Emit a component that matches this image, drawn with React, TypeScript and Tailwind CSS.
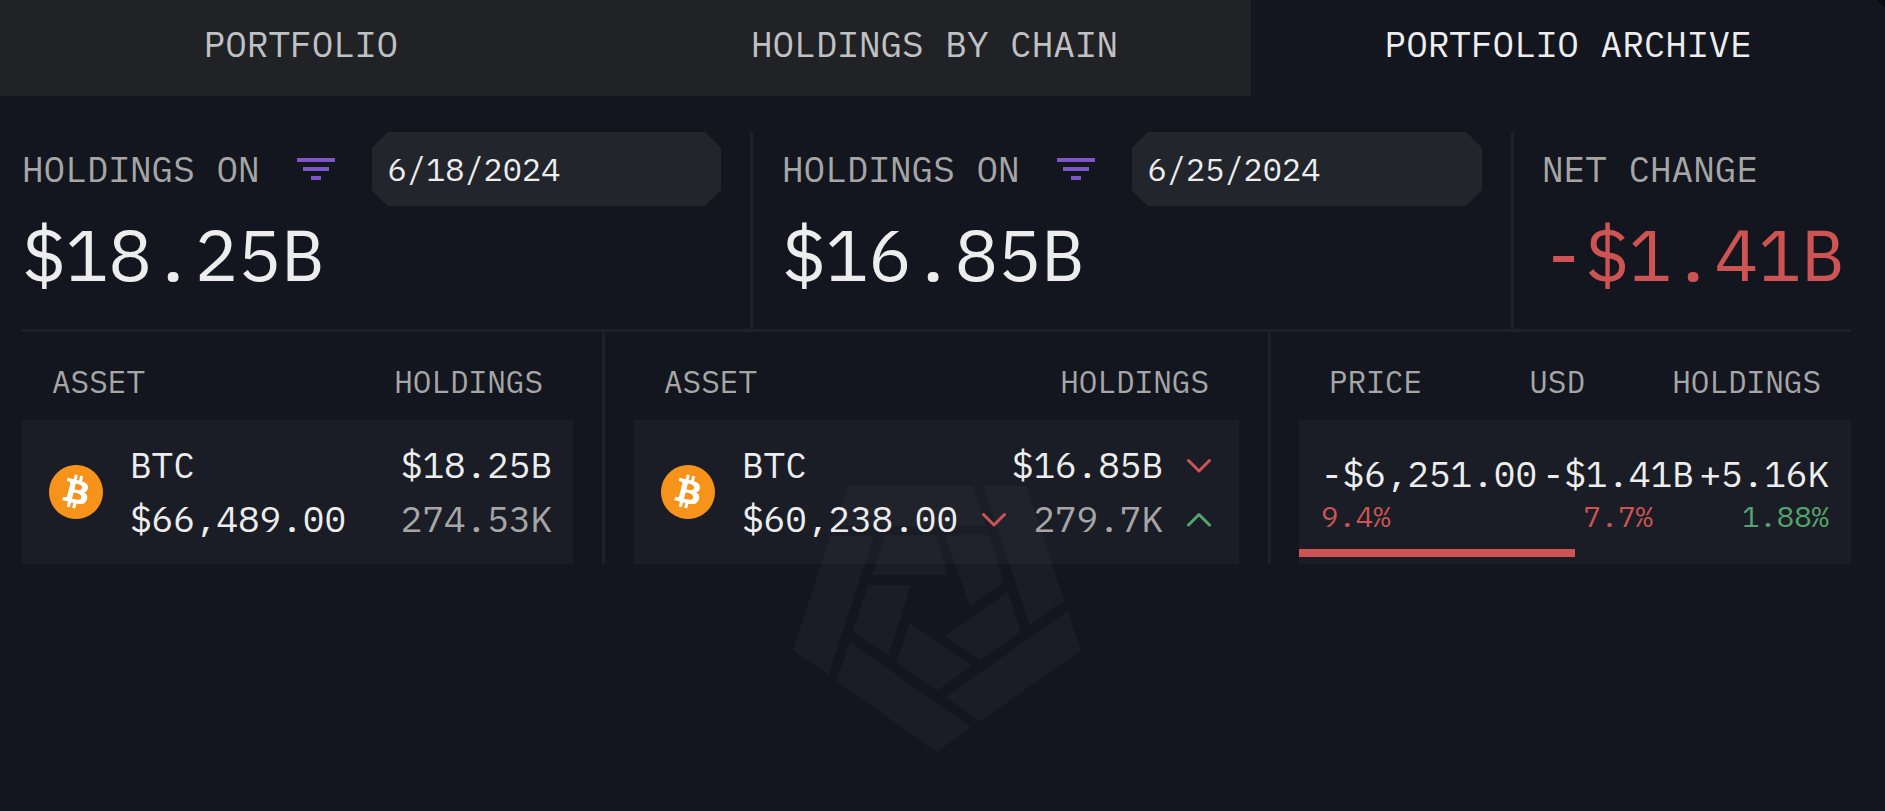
import type { ReactNode } from "react";
import { SiBitcoin } from "react-icons/si";

const tabs = ["PORTFOLIO", "HOLDINGS BY CHAIN", "PORTFOLIO ARCHIVE"];
const activeTab = "PORTFOLIO ARCHIVE";

function FilterIcon() {
  return (
    <svg viewBox="0 0 40 24" className="h-6 w-10" fill="#7e57c6" aria-hidden="true">
      <rect x="1" y="1" width="38" height="4" />
      <rect x="7" y="10" width="26" height="4" />
      <rect x="15" y="19" width="10" height="4" />
    </svg>
  );
}

function Chevron({ up = false }: { up?: boolean }) {
  return (
    <svg viewBox="0 0 24 16" className="ml-6 h-4 w-6 shrink-0" fill="none" aria-hidden="true">
      <path
        d={up ? "M1.5 14 12 3.5 22.5 14" : "M1.5 3.5 12 14 22.5 3.5"}
        stroke={up ? "#54a56d" : "#cd5453"}
        strokeWidth="3"
        strokeLinecap="round"
        strokeLinejoin="round"
      />
    </svg>
  );
}

function Watermark() {
  return (
    <svg
      viewBox="96 78 864 798"
      className="pointer-events-none absolute top-[390px] left-1/2 h-[266px] w-72 -translate-x-1/2"
      fill="#f0f0ff"
      fillOpacity="0.034"
      aria-hidden="true"
    >
      <polygon points="262,78 634,78 675,198 220,198" />
      <polygon points="667,78 796,78 910,422 806,495" />
      <polygon points="920,453 960,571 658,784 554,711" />
      <polygon points="266,545 632,803 527,875 226,663" />
      <polygon points="209,228 339,228 202,645 96,571" />
      <polygon points="373,226 523,226 562,346 332,346" />
      <polygon points="553,226 684,226 729,366 626,438" />
      <polygon points="740,396 779,515 658,601 554,528" />
      <polygon points="446,488 632,619 527,692 406,606" />
      <polygon points="322,375 450,375 382,588 275,515" />
    </svg>
  );
}

function DateTotal({ id, date, total }: { id: string; date: string; total: string }) {
  return (
    <>
      <div className="flex h-[74px] items-center gap-9">
        <label htmlFor={id} className="shrink-0 text-4xl text-[#a6a6a6]">
          HOLDINGS ON
        </label>
        <button type="button" aria-label="Filter" className="shrink-0">
          <FilterIcon />
        </button>
        <input
          id={id}
          type="text"
          defaultValue={date}
          className="h-full min-w-0 flex-1 bg-[#22252c] px-4 text-[32px] text-[#ededed] outline-none [clip-path:polygon(16px_0,calc(100%-16px)_0,100%_16px,100%_calc(100%-16px),calc(100%-16px)_100%,16px_100%,0_calc(100%-16px),0_16px)]"
        />
      </div>
      <p className="text-7xl leading-24 text-[#ededed]">{total}</p>
    </>
  );
}

function HeadRow({ children }: { children: ReactNode }) {
  return (
    <thead className="block">
      <tr className="flex h-22 items-center justify-between px-[30px] pt-3 text-[31px] text-[#a6a6a6]">
        {children}
      </tr>
    </thead>
  );
}

type AssetProps = {
  price: string;
  usd: string;
  amount: string;
  priceMark?: ReactNode;
  usdMark?: ReactNode;
  amountMark?: ReactNode;
};

function AssetTable({ price, usd, amount, priceMark, usdMark, amountMark }: AssetProps) {
  return (
    <table className="block w-full">
      <HeadRow>
        <th className="font-normal">ASSET</th>
        <th className="font-normal">HOLDINGS</th>
      </HeadRow>
      <tbody className="block">
        <tr
          className={
            usdMark
              ? "flex h-36 items-center justify-between bg-[#e8e8ff]/[0.036] pr-7 pl-[27px]"
              : "flex h-36 items-center justify-between bg-[#e8e8ff]/[0.036] pr-[21px] pl-[27px]"
          }
        >
          <td className="flex items-center gap-[27px]">
            <span className="relative flex size-[54px] shrink-0">
              <span className="absolute inset-2 rounded-full bg-white" />
              <SiBitcoin className="relative size-[54px] text-[#f7931a]" />
            </span>
            <span className="flex flex-col text-4xl leading-[54px] text-[#ededed]">
              <span>BTC</span>
              <span className="flex items-center">
                {price}
                {priceMark}
              </span>
            </span>
          </td>
          <td className="flex flex-col items-end text-4xl leading-[54px]">
            <span className="flex items-center text-[#ededed]">
              {usd}
              {usdMark}
            </span>
            <span className="flex items-center text-[#a6a6a6]">
              {amount}
              {amountMark}
            </span>
          </td>
        </tr>
      </tbody>
    </table>
  );
}

function ChangeTable() {
  return (
    <table className="block w-full">
      <HeadRow>
        <th className="font-normal">PRICE</th>
        <th className="pl-5 font-normal">USD</th>
        <th className="font-normal">HOLDINGS</th>
      </HeadRow>
      <tbody className="block bg-[#e8e8ff]/[0.036]">
        <tr className="flex h-[129px] items-end justify-between px-[22px] pb-[13px]">
          <td className="flex flex-col text-4xl leading-11 text-[#ededed]">
            -$6,251.00
            <span className="text-[29px] leading-10 text-[#cd5453]">9.4%</span>
          </td>
          <td className="flex flex-col items-center text-4xl leading-11 text-[#ededed]">
            -$1.41B
            <span className="text-[29px] leading-10 text-[#cd5453]">7.7%</span>
          </td>
          <td className="flex flex-col items-end text-4xl leading-11 text-[#ededed]">
            +5.16K
            <span className="text-[29px] leading-10 text-[#54a56d]">1.88%</span>
          </td>
        </tr>
        <tr className="block h-[15px]">
          <td className="block p-0">
            <div className="h-2 w-1/2 bg-[#cd5453]" />
          </td>
        </tr>
      </tbody>
    </table>
  );
}

export default function App() {
  return (
    <div className="min-h-screen bg-[#090b10]">
      <div className="min-h-screen overflow-hidden bg-[#13161e] font-['IBM_Plex_Mono','Liberation_Mono',monospace] [clip-path:polygon(0_0,calc(100%-8px)_0,100%_8px,100%_100%,0_100%)]">
        <nav className="-ml-4 grid grid-cols-3" role="tablist">
          {tabs.map((tab) => (
            <button
              key={tab}
              type="button"
              role="tab"
              aria-selected={tab === activeTab}
              className={
                tab === activeTab
                  ? "h-24 pb-2 text-4xl text-[#ededed]"
                  : "h-24 bg-[#212226] pb-2 text-4xl text-[#c0c1c3]"
              }
            >
              {tab}
            </button>
          ))}
        </nav>
        <main className="relative mr-[34px] ml-[22px] pt-9">
          <Watermark />
          <section className="relative grid grid-cols-[731fr_761fr_337fr] border-b-[3px] border-[#1e2129]">
            <div className="min-w-0 border-r-[3px] border-[#1e2129] pr-[29px] pb-[27px]">
              <DateTotal id="from-date" date="6/18/2024" total="$18.25B" />
            </div>
            <div className="min-w-0 border-r-[3px] border-[#1e2129] px-[29px] pb-[27px]">
              <DateTotal id="to-date" date="6/25/2024" total="$16.85B" />
            </div>
            <div className="min-w-0 pb-[27px] pl-7">
              <h2 className="flex h-[74px] items-center text-4xl text-[#a6a6a6]">NET CHANGE</h2>
              <p className="text-7xl leading-24 text-[#cd5453]">-$1.41B</p>
            </div>
          </section>
          <section className="relative grid grid-cols-[583fr_666fr_580fr]">
            <div className="border-r-[3px] border-[#1e2129] pr-[29px]">
              <AssetTable price="$66,489.00" usd="$18.25B" amount="274.53K" />
            </div>
            <div className="border-r-[3px] border-[#1e2129] px-[29px]">
              <AssetTable
                price="$60,238.00"
                usd="$16.85B"
                amount="279.7K"
                priceMark={<Chevron />}
                usdMark={<Chevron />}
                amountMark={<Chevron up />}
              />
            </div>
            <div className="pl-7">
              <ChangeTable />
            </div>
          </section>
        </main>
      </div>
    </div>
  );
}
